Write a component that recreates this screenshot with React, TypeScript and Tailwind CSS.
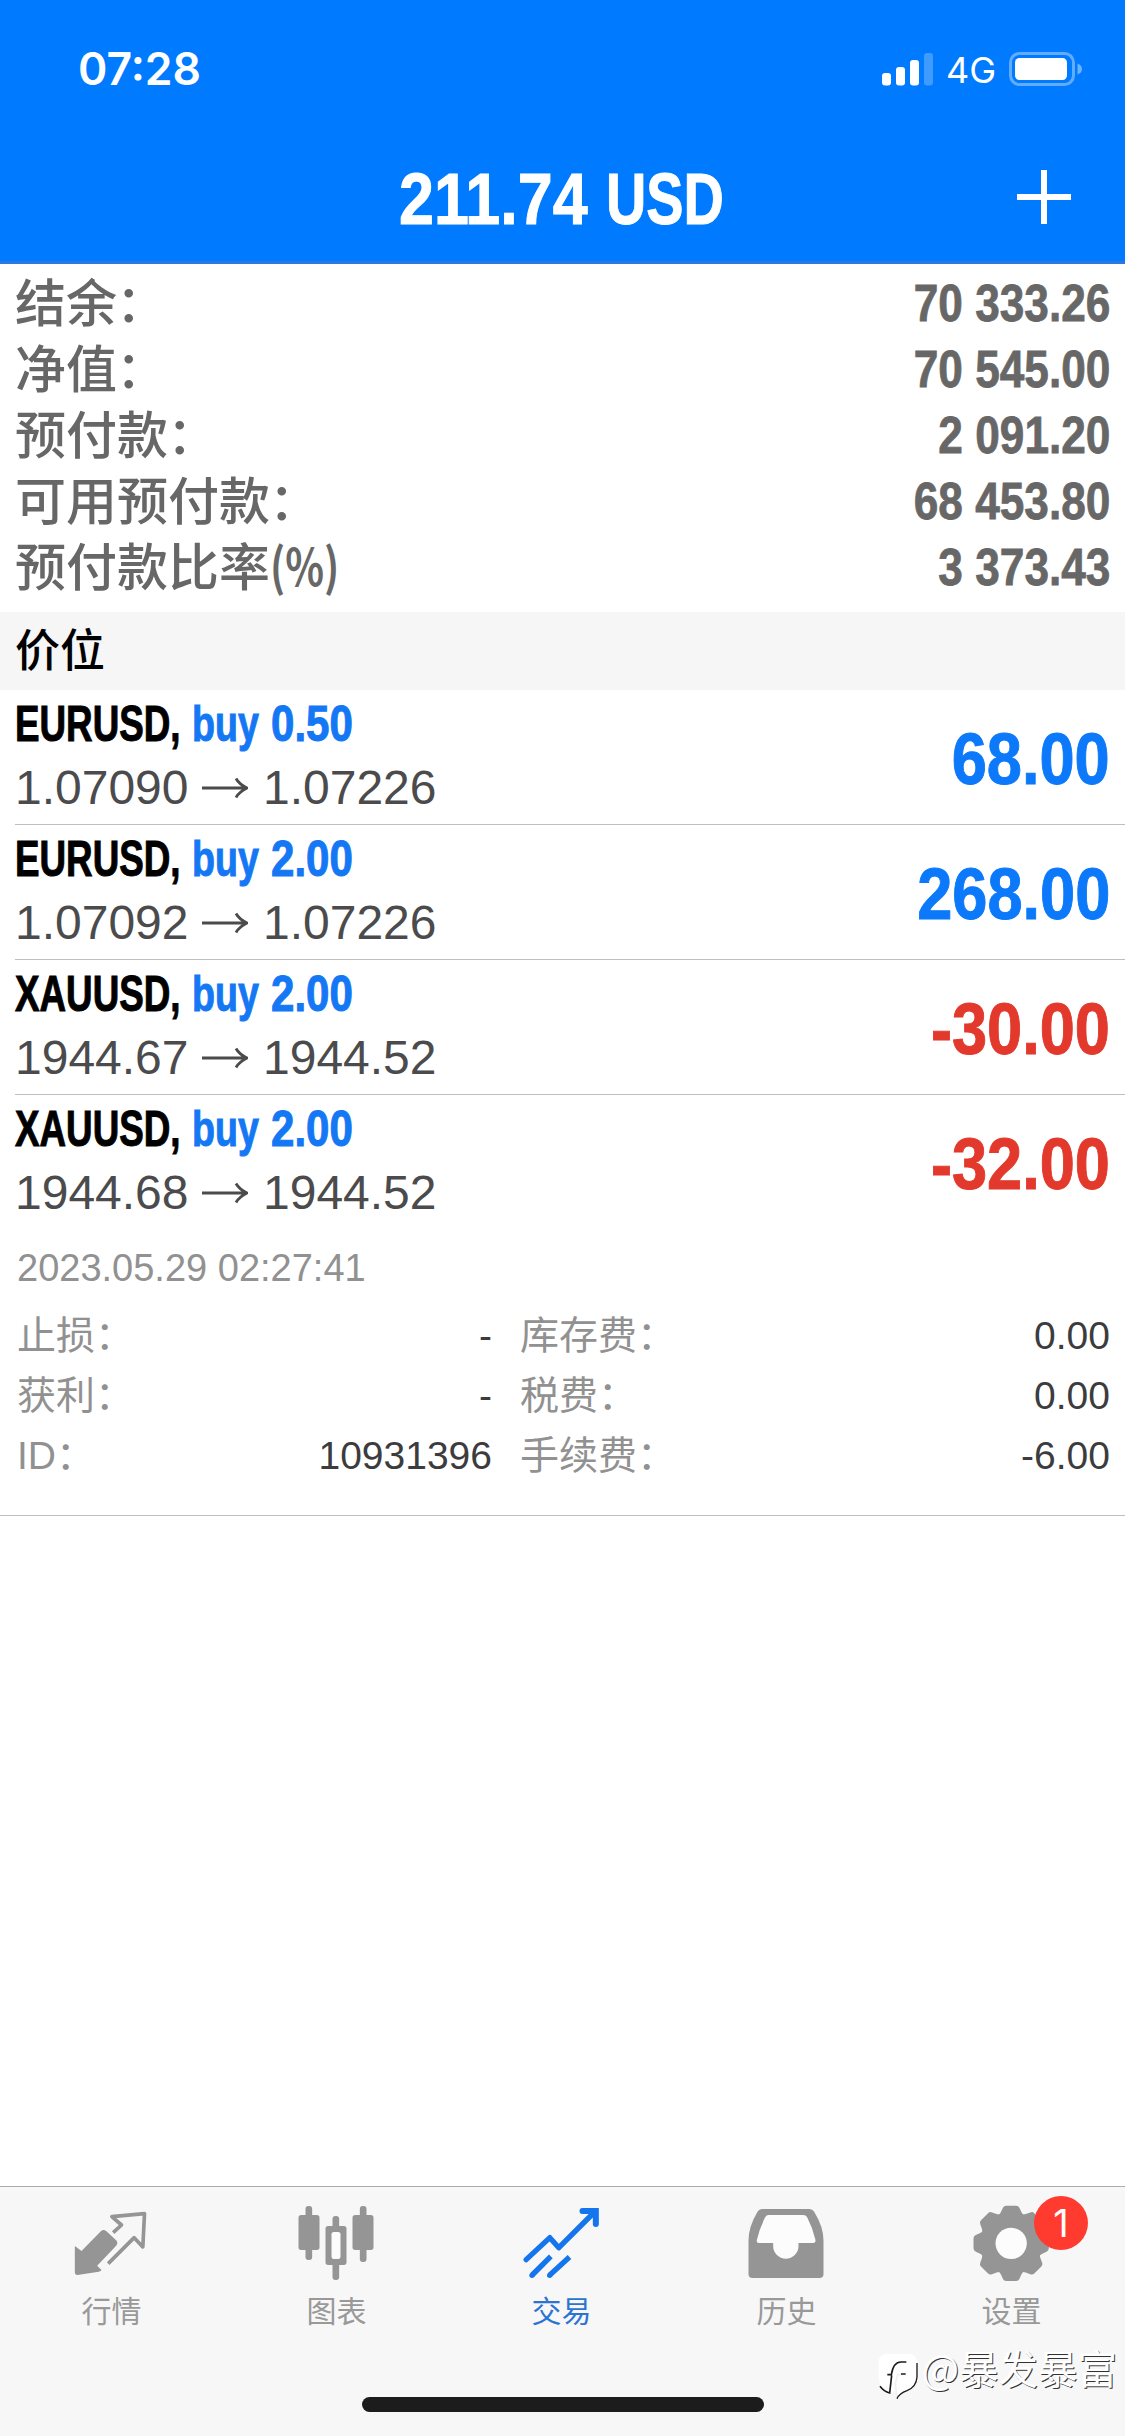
import type { ReactNode } from 'react';

const summary = [
    { label: '结余', value: '70 333.26' },
    { label: '净值', value: '70 545.00' },
    { label: '预付款', value: '2 091.20' },
    { label: '可用预付款', value: '68 453.80' },
    { label: '预付款比率', suffix: '(%)', value: '3 373.43' },
];

const positions = [
    { symbol: 'EURUSD', volume: '0.50', open: '1.07090', current: '1.07226', profit: '68.00' },
    { symbol: 'EURUSD', volume: '2.00', open: '1.07092', current: '1.07226', profit: '268.00' },
    { symbol: 'XAUUSD', volume: '2.00', open: '1944.67', current: '1944.52', profit: '-30.00' },
    { symbol: 'XAUUSD', volume: '2.00', open: '1944.68', current: '1944.52', profit: '-32.00' },
];

const details = [
    { label: '止损：', value: '-', label2: '库存费：', value2: '0.00' },
    { label: '获利：', value: '-', label2: '税费：', value2: '0.00' },
    { label: 'ID：', value: '10931396', label2: '手续费：', value2: '-6.00' },
];

const StatusBar = () => (
    <div className="flex h-[131px] items-center pt-[7px] pl-[78px] pr-[43px] font-['Inter',sans-serif]">
        <span className="flex-1 text-[44.5px] font-semibold leading-none">07:28</span>
        <svg className="w-[51px] h-[33px]" viewBox="0 0 51 33" fill="white">
            <rect x="0" y="20" width="9" height="12.5" rx="3" />
            <rect x="14" y="14" width="9" height="18.5" rx="3" />
            <rect x="28" y="7" width="9" height="25.5" rx="3" />
            <rect x="42" y="0" width="9" height="32.5" rx="3" opacity="0.25" />
        </svg>
        <span className="w-[76px] pl-[13px] pt-[2px] text-[36px] leading-none">4G</span>
        <svg className="w-[73px] h-[34px]" viewBox="0 0 73 34">
            <rect x="1.5" y="1.5" width="63" height="31" rx="9" fill="none" stroke="white" strokeWidth="3" opacity="0.38" />
            <rect x="6" y="6" width="52" height="22" rx="4.5" fill="white" />
            <path d="M68.5 11.5q4.5 1.5 4.5 5.5t-4.5 5.5z" fill="white" opacity="0.42" />
        </svg>
    </div>
);

const Header = () => (
    <header className="h-[264px] border-b-[3px] border-[#2b79e0] bg-[#007aff] text-white">
        <StatusBar />
        <div className="flex h-[132px] items-center justify-between pl-[50px] pr-[54px]">
            <div className="w-[54px]" />
            <h1 className="flex pt-[2px] text-[73px] font-bold leading-none [-webkit-text-stroke:1px]">
                <span className="w-[207px] origin-left scale-x-[0.86]">211.74</span>
                <span className="w-[117px] origin-left scale-x-[0.765]">USD</span>
            </h1>
            <svg className="w-[54px] h-[54px]" viewBox="0 0 54 54" stroke="white" strokeWidth="6">
                <path d="M27 0V54M0 27H54" />
            </svg>
        </div>
    </header>
);

const Summary = () => (
    <section className="h-[348px] pt-[6px] pl-[15px] pr-[15px] text-[#676767]">
        {summary.map((row) => (
            <div key={row.label} className="flex h-[66px] items-center justify-between">
                <span className="flex pb-[5px] text-[51px] font-medium leading-none font-['Noto_Sans_CJK_SC',sans-serif]">
                    {row.label}
                    {row.suffix ? (
                        <span className="origin-left scale-x-[0.79] font-bold">{row.suffix}</span>
                    ) : (
                        <span className="-ml-px">：</span>
                    )}
                </span>
                <span className="origin-right scale-x-[0.85] text-[52px] font-bold leading-none [-webkit-text-stroke:0.8px]">{row.value}</span>
            </div>
        ))}
    </section>
);

const Arrow = () => (
    <svg className="w-[46px] h-[22px]" viewBox="0 0 46 22" fill="none" stroke="#4b4b4d" strokeWidth="2.8">
        <path d="M0 11H44M34 1.5Q37 7 45 11Q37 15 34 20.5" />
    </svg>
);

const Position = ({ item, last }: { item: (typeof positions)[number]; last: boolean }) => (
    <div className={`ml-[15px] flex h-[135px] items-center justify-between pr-[15px] border-b ${last ? 'border-transparent' : 'border-[#bfbfc1]'}`}>
        <div>
            <div className="flex h-[61px] items-center text-[49.5px] font-bold leading-none [-webkit-text-stroke:1px]">
                <span className="w-[177px] origin-left scale-x-[0.743] text-black">{item.symbol},</span>
                <span className="w-[79px] origin-left scale-x-[0.76] text-[#1477f4]">buy</span>
                <span className="origin-left scale-x-[0.85] text-[#1477f4]">{item.volume}</span>
            </div>
            <div className="flex h-[66px] items-center text-[48px] leading-none text-[#4b4b4d]">
                <span className="w-[187px]">{item.open}</span>
                <Arrow />
                <span className="pl-[15px]">{item.current}</span>
            </div>
        </div>
        <div className={`origin-right scale-x-[0.865] pt-[3px] text-[73px] font-bold leading-none [-webkit-text-stroke:1px] ${item.profit.startsWith('-') ? 'text-[#e2392c]' : 'text-[#0b79fa]'}`}>
            {item.profit}
        </div>
    </div>
);

const Details = () => (
    <div className="h-[286px] border-b border-[#bfbfc1] pl-[17px] pr-[15px] text-[#919191]">
        <div className="flex h-[75px] items-center text-[38px] leading-none">2023.05.29 02:27:41</div>
        {details.map((row) => (
            <div key={row.label} className="flex h-[60px] items-center text-[39px] leading-none">
                <span>{row.label}</span>
                <span className="ml-auto text-[#3c3c3e]">{row.value}</span>
                <div className="ml-[28px] flex w-[590px] justify-between">
                    <span>{row.label2}</span>
                    <span className="text-[#3c3c3e]">{row.value2}</span>
                </div>
            </div>
        ))}
    </div>
);

const QuotesIcon = () => (
    <svg className="w-20 h-20" viewBox="217.5 69 240 240" fill="none">
        <path d="M226 198L246 213L304 154Q312 146 320 153L350 181Q357 189 350 197L293 257L306 270Q304 274 298 275L234 285Q226 285 226 277Z" fill="#959595" />
        <path d="M341 158L366 135L337 110L435 101L430 201L404 173L326 251" stroke="#959595" strokeWidth="11" strokeLinejoin="round" />
    </svg>
);

const ChartIcon = () => (
    <svg className="w-20 h-20" viewBox="892.5 69 240 240" fill="#959595">
        <rect x="918" y="78" width="20" height="162" rx="9" />
        <rect x="897" y="105" width="63" height="105" rx="8" />
        <rect x="999" y="108" width="20" height="192" rx="9" />
        <rect x="978" y="138" width="63" height="117" rx="8" />
        <rect x="996" y="156" width="27" height="81" rx="7" fill="#fcfcfc" />
        <rect x="1081" y="78" width="20" height="168" rx="9" />
        <rect x="1059" y="105" width="63" height="105" rx="8" />
    </svg>
);

const TradeIcon = () => (
    <svg className="w-20 h-20" viewBox="487.5 69 240 240" fill="none" stroke="#1475ec" strokeWidth="16">
        <path d="M500 239L571 173L598 203L708 93" strokeLinecap="round" strokeLinejoin="round" />
        <path d="M669 93H709V132" strokeWidth="18" strokeLinecap="round" />
        <path d="M574 229L518 285M630 231L571 285" />
        <circle cx="517.5" cy="286" r="8" fill="#1475ec" stroke="none" />
        <circle cx="570.5" cy="286" r="8" fill="#1475ec" stroke="none" />
    </svg>
);

const HistoryIcon = () => (
    <svg className="w-20 h-20" viewBox="67.5 69 240 240">
        <path d="M112 87H255Q264 87 269 95Q297 140 297 182V282Q297 294 285 294H84Q72 294 72 282V182Q72 140 99 95Q104 87 112 87Z" fill="#959595" />
        <path d="M132 105H236Q244 105 248 112Q265 145 273 180Q274 189 266 189H222V198A38 38 0 0 1 146 198V189H103Q95 188 97 180Q105 145 122 112Q126 105 132 105Z" fill="#fcfcfc" />
    </svg>
);

const GearIcon = () => (
    <svg className="w-20 h-20" viewBox="742.5 69 240 240" fill="#959595">
        <circle cx="860" cy="190" r="89" />
        {[0, 45, 90, 135, 180, 225, 270, 315].map((angle) => (
            <path
                key={angle}
                transform={`rotate(${angle} 860 190)`}
                d="M845 77H875Q882 77 885 84L891 97Q894 104 902 108V130H818V108Q826 104 829 97L835 84Q838 77 845 77Z"
            />
        ))}
        <circle cx="860" cy="190" r="47" fill="#fcfcfc" />
    </svg>
);

const Tab = ({ label, active, badge, children }: { label: string; active?: boolean; badge?: string; children: ReactNode }) => (
    <div className="relative -ml-px mr-px flex w-[225px] flex-col items-center pt-[16px]">
        {children}
        <span className={`mt-[14px] text-[30px] leading-[30px] ${active ? 'text-[#2b74d4]' : 'text-[#999999]'}`}>{label}</span>
        {badge && (
            <span className="absolute left-[135px] top-[9px] flex size-[54px] items-center justify-center rounded-full bg-[#ff3b30] font-['Inter',sans-serif] text-[38px] leading-none text-white">
                {badge}
            </span>
        )}
    </div>
);

const Watermark = () => (
    <div className="absolute right-[8px] top-[156px] flex items-start">
        <svg className="mt-[9px] w-[42px] h-[48px]" viewBox="455 515 126 144" fill="none">
            <path d="M485 521H548Q575 521 575 548V588Q575 622 546 632Q524 639 515 655L512 632L495 638Q460 625 460 590V546Q460 521 485 521Z" fill="white" />
            <path d="M515 655L510 610L517 583H530" stroke="#f1f1f1" strokeWidth="5" />
            <path d="M464 618Q476 634 493 638L499 585M486 583H498Q504 545 527 545H543M527 581H541" stroke="#1b1b1b" strokeWidth="5" />
            <path d="M515 655Q522 639 545 631Q573 620 575 590V548" stroke="#1b1b1b" strokeWidth="4" />
        </svg>
        <span className="ml-[3px] text-[39.5px] leading-[48px] text-white [text-shadow:1px_1px_0_#333] font-['Noto_Sans_CJK_SC',sans-serif]">@暴发暴富</span>
    </div>
);

export default function App() {
    return (
        <div className="flex h-[2436px] w-[1125px] flex-col overflow-hidden bg-white font-['Liberation_Sans','Noto_Sans_CJK_SC',sans-serif]">
            <Header />
            <Summary />
            <h2 className="flex h-[78px] items-center bg-[#f6f6f6] pl-[15px] text-[45px] font-medium leading-none text-black">价位</h2>
            {positions.map((item, i) => (
                <Position key={i} item={item} last={i === positions.length - 1} />
            ))}
            <Details />
            <nav className="relative mt-auto flex h-[250px] border-t border-[#acacac] bg-[#f7f7f7]">
                <Tab label="行情"><QuotesIcon /></Tab>
                <Tab label="图表"><ChartIcon /></Tab>
                <Tab label="交易" active><TradeIcon /></Tab>
                <Tab label="历史"><HistoryIcon /></Tab>
                <Tab label="设置" badge="1"><GearIcon /></Tab>
                <div className="absolute bottom-[24px] left-[362px] h-[15px] w-[402px] rounded-full bg-[#1c1c1c]" />
                <Watermark />
            </nav>
        </div>
    );
}
